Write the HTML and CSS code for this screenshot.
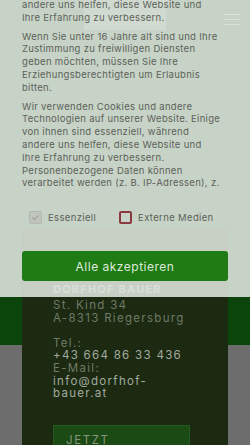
FILE: index.html
```html
<!DOCTYPE html>
<html lang="de">
<head>
<meta charset="utf-8">
<title>Dorfhof Bauer – Kontakt</title>
<link rel="stylesheet" href="styles.css">
</head>
<body>
<header class="site-header">
  <div class="logo"></div>
  <div class="burger"><span></span><span></span><span></span></div>
</header>
<main class="card">
  <h2 class="kicker">KONTAKT</h2>
  <h3 class="name">DORFHOF BAUER</h3>
  <p class="addr">St. Kind 34<br>A-8313 Riegersburg<br><br>Tel.:<br><a class="hl">+43 664 86 33 436</a><br>E-Mail:<br><a class="hl">info@dorfhof-<br>bauer.at</a></p>
  <a class="cta">JETZT<br>ANFRAGEN</a>
</main>

<div class="cookie">
  <div class="cookie-scroll">
    <div class="cookie-text">
      <p>andere uns helfen, diese Website und<br>Ihre Erfahrung zu verbessern.</p>
      <p>Wenn Sie unter 16 Jahre alt sind und Ihre<br>Zustimmung zu freiwilligen Diensten<br>geben möchten, müssen Sie Ihre<br>Erziehungsberechtigten um Erlaubnis<br>bitten.</p>
      <p>Wir verwenden Cookies und andere<br>Technologien auf unserer Website. Einige<br>von ihnen sind essenziell, während<br>andere uns helfen, diese Website und<br>Ihre Erfahrung zu verbessern.<br>Personenbezogene Daten können<br>verarbeitet werden (z. B. IP-Adressen), z.<br>B. für personalisierte Anzeigen und Inhalte.</p>
    </div>
  </div>
  <div class="choices">
    <label class="choice"><span class="box box-on"><svg viewBox="0 0 12 12" width="9" height="9"><path d="M2 6.2 L4.8 9 L10 3" fill="none" stroke="#979c97" stroke-width="1.4"/></svg></span>Essenziell</label>
    <label class="choice"><span class="box box-off"></span>Externe Medien</label>
  </div>
  <button class="accept">Alle akzeptieren</button>
  <div class="tail"></div>
</div>
</body>
</html>
```
FILE: styles.css
```css
* { box-sizing: border-box; }
html, body { margin: 0; padding: 0; }
body {
  position: relative;
  width: 250px;
  height: 445px;
  overflow: hidden;
  font-family: Inter, "Liberation Sans", sans-serif;
  background: linear-gradient(#0b450b 0, #0b450b 345px, #6d6d6d 345px);
}
.site-header {
  display: grid;
  grid-template-columns: 1fr auto 1fr;
  height: 40px;
}
.logo {
  grid-column: 2;
  width: 82px;
  height: 30px;
  background: #6f8a6f;
}
.burger {
  grid-column: 3;
  justify-self: end;
  display: flex;
  flex-direction: column;
  gap: 3.5px;
  padding: 13.5px 10px 0 0;
}
.burger span {
  display: block;
  width: 16px;
  height: 1.5px;
  background: #f4f4f4;
}
.card {
  margin: 188px 22px 0;
  padding: 24px 31px 30px;
  background: #1b2a10;
  min-height: 300px;
}
.kicker {
  margin: 0;
  font-size: 9px;
  line-height: 12px;
  letter-spacing: 2px;
  font-weight: 500;
  color: #0c5a0c;
}
.name {
  margin: 19px 0 3px;
  font-size: 11px;
  line-height: 13px;
  letter-spacing: 1.2px;
  font-weight: 700;
  color: #b8bdb5;
}
.addr {
  margin: 0;
  font-size: 11.5px;
  line-height: 12.6px;
  letter-spacing: 1.3px;
  color: #707a69;
}
.hl { color: #a4aba0; }
.cta {
  display: block;
  margin-top: 25px;
  width: 137px;
  padding: 8px 12px;
  background: #1b4a15;
  border: 1px solid #235a1d;
  font-size: 11.5px;
  line-height: 13px;
  letter-spacing: 1.6px;
  color: #82957d;
}

.cookie {
  position: absolute;
  z-index: 10;
  top: 0;
  left: 0;
  width: 250px;
  padding: 0 22px;
  background: rgba(220, 226, 218, 0.9);
  display: flex;
  flex-direction: column;
}
.cookie > * { flex-shrink: 0; }
.tail { height: 16px; }
.cookie-scroll {
  height: 190px;
  overflow: hidden;
}
.cookie-text {
  margin-top: -1px;
  font-size: 9.5px;
  line-height: 12.8px;
  letter-spacing: 0.3px;
  color: #5c615a;
}
.cookie-text p { margin: 0 0 6px; white-space: nowrap; }
.choices {
  display: flex;
  gap: 23px;
  margin-top: 21px;
  padding-left: 7px;
  font-size: 9.5px;
  line-height: 13px;
  letter-spacing: 0.35px;
  color: #5c615a;
}
.choice {
  display: flex;
  align-items: center;
  gap: 6px;
}
.box {
  width: 13px;
  height: 13px;
  border-radius: 2px;
  display: flex;
  align-items: center;
  justify-content: center;
}
.box-on { background: #bfc4bd; border: 1px solid #b3b8b1; }
.box-off { border: 2px solid #8c3a3e; background: transparent; }
.accept {
  margin-top: 27px;
  height: 30px;
  border: 0;
  border-radius: 3px;
  background: #1f7b14;
  color: #dfe9da;
  font-family: Inter, "Liberation Sans", sans-serif;
  font-size: 12px;
  letter-spacing: 0.5px;
  font-weight: 400;
}
```
